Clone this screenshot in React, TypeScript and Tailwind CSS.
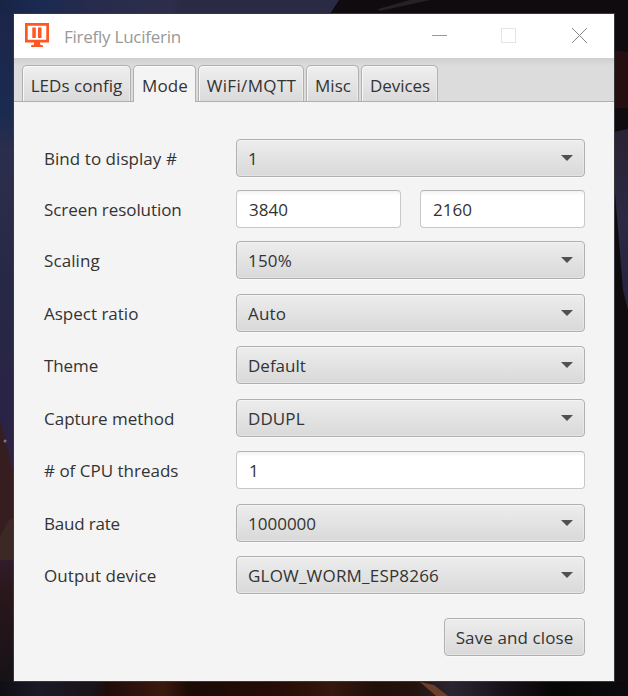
import React from "react";

function Wallpaper() {
  return (
    <svg className="absolute inset-0" width="628" height="696" viewBox="0 0 628 696">
      <defs>
        <linearGradient id="top" x1="0" x2="1" y1="0" y2="0">
          <stop offset="0" stopColor="#172446" />
          <stop offset="0.12" stopColor="#1b2a52" />
          <stop offset="0.25" stopColor="#262a4c" />
          <stop offset="0.5" stopColor="#2e2e4b" />
          <stop offset="0.53" stopColor="#2a2a45" />
        </linearGradient>
        <linearGradient id="left" x1="0" x2="0" y1="0" y2="1">
          <stop offset="0" stopColor="#1b2549" />
          <stop offset="0.15" stopColor="#1b2b50" />
          <stop offset="0.2" stopColor="#2b2e4c" />
          <stop offset="0.4" stopColor="#272846" />
          <stop offset="0.6" stopColor="#2a2345" />
          <stop offset="0.75" stopColor="#38213a" />
          <stop offset="0.85" stopColor="#29171b" />
          <stop offset="1" stopColor="#131116" />
        </linearGradient>
        <linearGradient id="right" x1="0" x2="0" y1="0" y2="1">
          <stop offset="0" stopColor="#2a2233" />
          <stop offset="0.5" stopColor="#2b2944" />
          <stop offset="1" stopColor="#25243d" />
        </linearGradient>
        <linearGradient id="bottom" x1="0" x2="1" y1="0" y2="0">
          <stop offset="0" stopColor="#0f0e14" />
          <stop offset="0.06" stopColor="#1a1a25" />
          <stop offset="0.15" stopColor="#1a131a" />
          <stop offset="0.17" stopColor="#1f0c0a" />
          <stop offset="0.26" stopColor="#3b190d" />
          <stop offset="0.3" stopColor="#1b0a06" />
          <stop offset="0.45" stopColor="#260d05" />
          <stop offset="0.53" stopColor="#35170d" />
          <stop offset="0.6" stopColor="#1f0f09" />
          <stop offset="0.66" stopColor="#24130c" />
          <stop offset="0.72" stopColor="#2a2530" />
          <stop offset="0.8" stopColor="#17121a" />
          <stop offset="0.88" stopColor="#080506" />
          <stop offset="1" stopColor="#0d0a0e" />
        </linearGradient>
      </defs>
      <rect width="628" height="696" fill="#0f0b0e" />
      <path d="M0 0H339L330 14H0Z" fill="url(#top)" />
      <path d="M378 9L410 0H430L380 11Z" fill="#252126" />
      <rect y="14" width="14" height="682" fill="url(#left)" />
      <path d="M0 420L12 468H14V540H0Z" fill="#351d20" />
      <path d="M0 536L9 520L14 518V560H0Z" fill="#3c2825" />
      <circle cx="5" cy="441" r="1.500" fill="#7d7599" />
      <path d="M614 50L628 52V108H614Z" fill="#25100f" />
      <path d="M614 132L628 129V310L623 290L614 180Z" fill="url(#right)" />
      <rect y="681" width="628" height="15" fill="url(#bottom)" />
      <path d="M420 682L434 685L448 696H436Z" fill="#6b3f2b" />
    </svg>
  );
}

const TABS = [
  { label: "LEDs config", width: "w-[109px]", text: "tracking-[0.03px]" },
  { label: "Mode", width: "w-[63px]", text: "tracking-[0.1px] pl-px" },
  { label: "WiFi/MQTT", width: "w-[106px]", text: "tracking-[0.35px] pl-px" },
  { label: "Misc", width: "w-[53px]", text: "tracking-[0.1px] pl-px" },
  { label: "Devices", width: "w-[77px]", text: "tracking-[-0.05px] pl-px" },
];

function Tabs() {
  return (
    <div className="flex h-[44px] items-end border-b border-[#b0b0b0] bg-[linear-gradient(#cfcfcf,#dcdcdc_8px,#dcdcdc)] pl-2">
      {TABS.map((t) => {
        const active = t.label === "Mode";
        return (
          <div
            key={t.label}
            className={`${t.width} mr-[2px] flex shrink-0 justify-center whitespace-nowrap rounded-t-[5px] border border-b-0 border-[#b0b0b0] pt-[7px] leading-[25px] ${
              active
                ? "-mb-px h-[37px] bg-[#f4f4f4] shadow-[inset_0_1px_0_#fcfcfc]"
                : "h-[36px] bg-[linear-gradient(#efefef,#dadada)] shadow-[inset_1px_1px_0_#f8f8f8,inset_-1px_0_0_#ececec]"
            }`}
          >
            <span className={t.text}>{t.label}</span>
          </div>
        );
      })}
    </div>
  );
}

const BUTTON =
  "rounded-[4px] border border-[#b0b0b0] bg-[linear-gradient(#ededed,#d9d9d9)] shadow-[inset_0_0_0_1px_#f0f0f080,inset_0_1px_0_#f8f8f8,0_1px_0_#fafafa]";

function Combo({ value, text = "" }: { value: string; text?: string }) {
  return (
    <div className={`flex h-[38px] w-[349px] items-center justify-between pl-[11px] pr-[11px] ${BUTTON}`}>
      <span className={`mt-[2px] ${text}`}>{value}</span>
      <svg width="12" height="6" viewBox="0 0 12 6" className="-mt-px">
        <path d="M0 0H12L6 6Z" fill="#515151" />
      </svg>
    </div>
  );
}

function Field({ value, width }: { value: string; width: string }) {
  return (
    <div
      className={`flex h-[38px] items-center rounded-[4px] border border-[#c8c8c8] border-t-[#b4b4b4] bg-[linear-gradient(#f3f3f3,#fff_5px)] pl-3 ${width}`}
    >
      <span className="mt-[2px]">{value}</span>
    </div>
  );
}

function Row({ label, text = "", gap, children }: { label: string; text?: string; gap: string; children: React.ReactNode }) {
  return (
    <div className={`flex h-[38px] items-center ${gap}`}>
      <span className={`mt-[2px] w-[192px] shrink-0 whitespace-nowrap ${text}`}>{label}</span>
      {children}
    </div>
  );
}

export default function App() {
  return (
    <div className="relative h-[696px] w-[628px] overflow-hidden p-[13px] font-['Open_Sans',sans-serif] text-[17px] text-[#333]">
      <Wallpaper />
      <div className="relative h-[669px] w-[602px] border border-[#38373c] bg-[#f4f4f4]">
        <header className="flex h-[44px] items-center bg-white pl-[11px] text-[#999]">
          <svg width="24" height="24" viewBox="0 0 24 24" className="-mt-[2px]" fill="#ff5722">
            <path fillRule="evenodd" d="M0 0H24V19.500H0ZM2.700 2.700V16.800H21.300V2.700Z" />
            <path d="M7.300 4.500H10.800V15H7.300ZM13 4.500H16.500V15H13ZM9 19H15V21.500L18 22.500V24H6V22.500L9 21.500Z" />
          </svg>
          <h1 className="ml-[15px] mt-[2px] tracking-[-0.25px]">Firefly Luciferin</h1>
          <svg className="ml-auto mr-[26px]" width="156" height="16" viewBox="0 0 156 16" fill="none">
            <path d="M0 7.500H15" stroke="#999" />
            <rect x="69.500" y="0.500" width="14" height="14" stroke="#e5e5e5" />
            <path d="M140 0L155 15M155 0L140 15" stroke="#888" />
          </svg>
        </header>
        <Tabs />
        <main className="pl-[30px] pr-[29px] pt-[37px]">
          <Row label="Bind to display #" gap="mb-[13px]" text="tracking-[0.05px]"><Combo value="1" /></Row>
          <Row label="Screen resolution" gap="mb-[13px]" text="tracking-[-0.07px]">
            <div className="flex gap-[19px]">
              <Field value="3840" width="w-[165px]" />
              <Field value="2160" width="w-[165px]" />
            </div>
          </Row>
          <Row label="Scaling" gap="mb-[15px]" text="tracking-[0.1px]"><Combo value="150%" text="tracking-[0.2px]" /></Row>
          <Row label="Aspect ratio" gap="mb-[14px]"><Combo value="Auto" text="tracking-[0.2px]" /></Row>
          <Row label="Theme" gap="mb-[15px]" text="tracking-[-0.1px]"><Combo value="Default" /></Row>
          <Row label="Capture method" gap="mb-[14px]"><Combo value="DDUPL" text="tracking-[0.1px]" /></Row>
          <Row label="# of CPU threads" gap="mb-[15px]"><Field value="1" width="w-[349px]" /></Row>
          <Row label="Baud rate" gap="mb-[14px]" text="tracking-[-0.2px]"><Combo value="1000000" /></Row>
          <Row label="Output device" gap="mb-[24px]" text="tracking-[0.07px]"><Combo value="GLOW_WORM_ESP8266" text="tracking-[0.2px]" /></Row>
          <div className="flex justify-end">
            <button className={`h-[38px] w-[141px] whitespace-nowrap pt-[2px] tracking-[0.1px] ${BUTTON}`}>Save and close</button>
          </div>
        </main>
      </div>
    </div>
  );
}
